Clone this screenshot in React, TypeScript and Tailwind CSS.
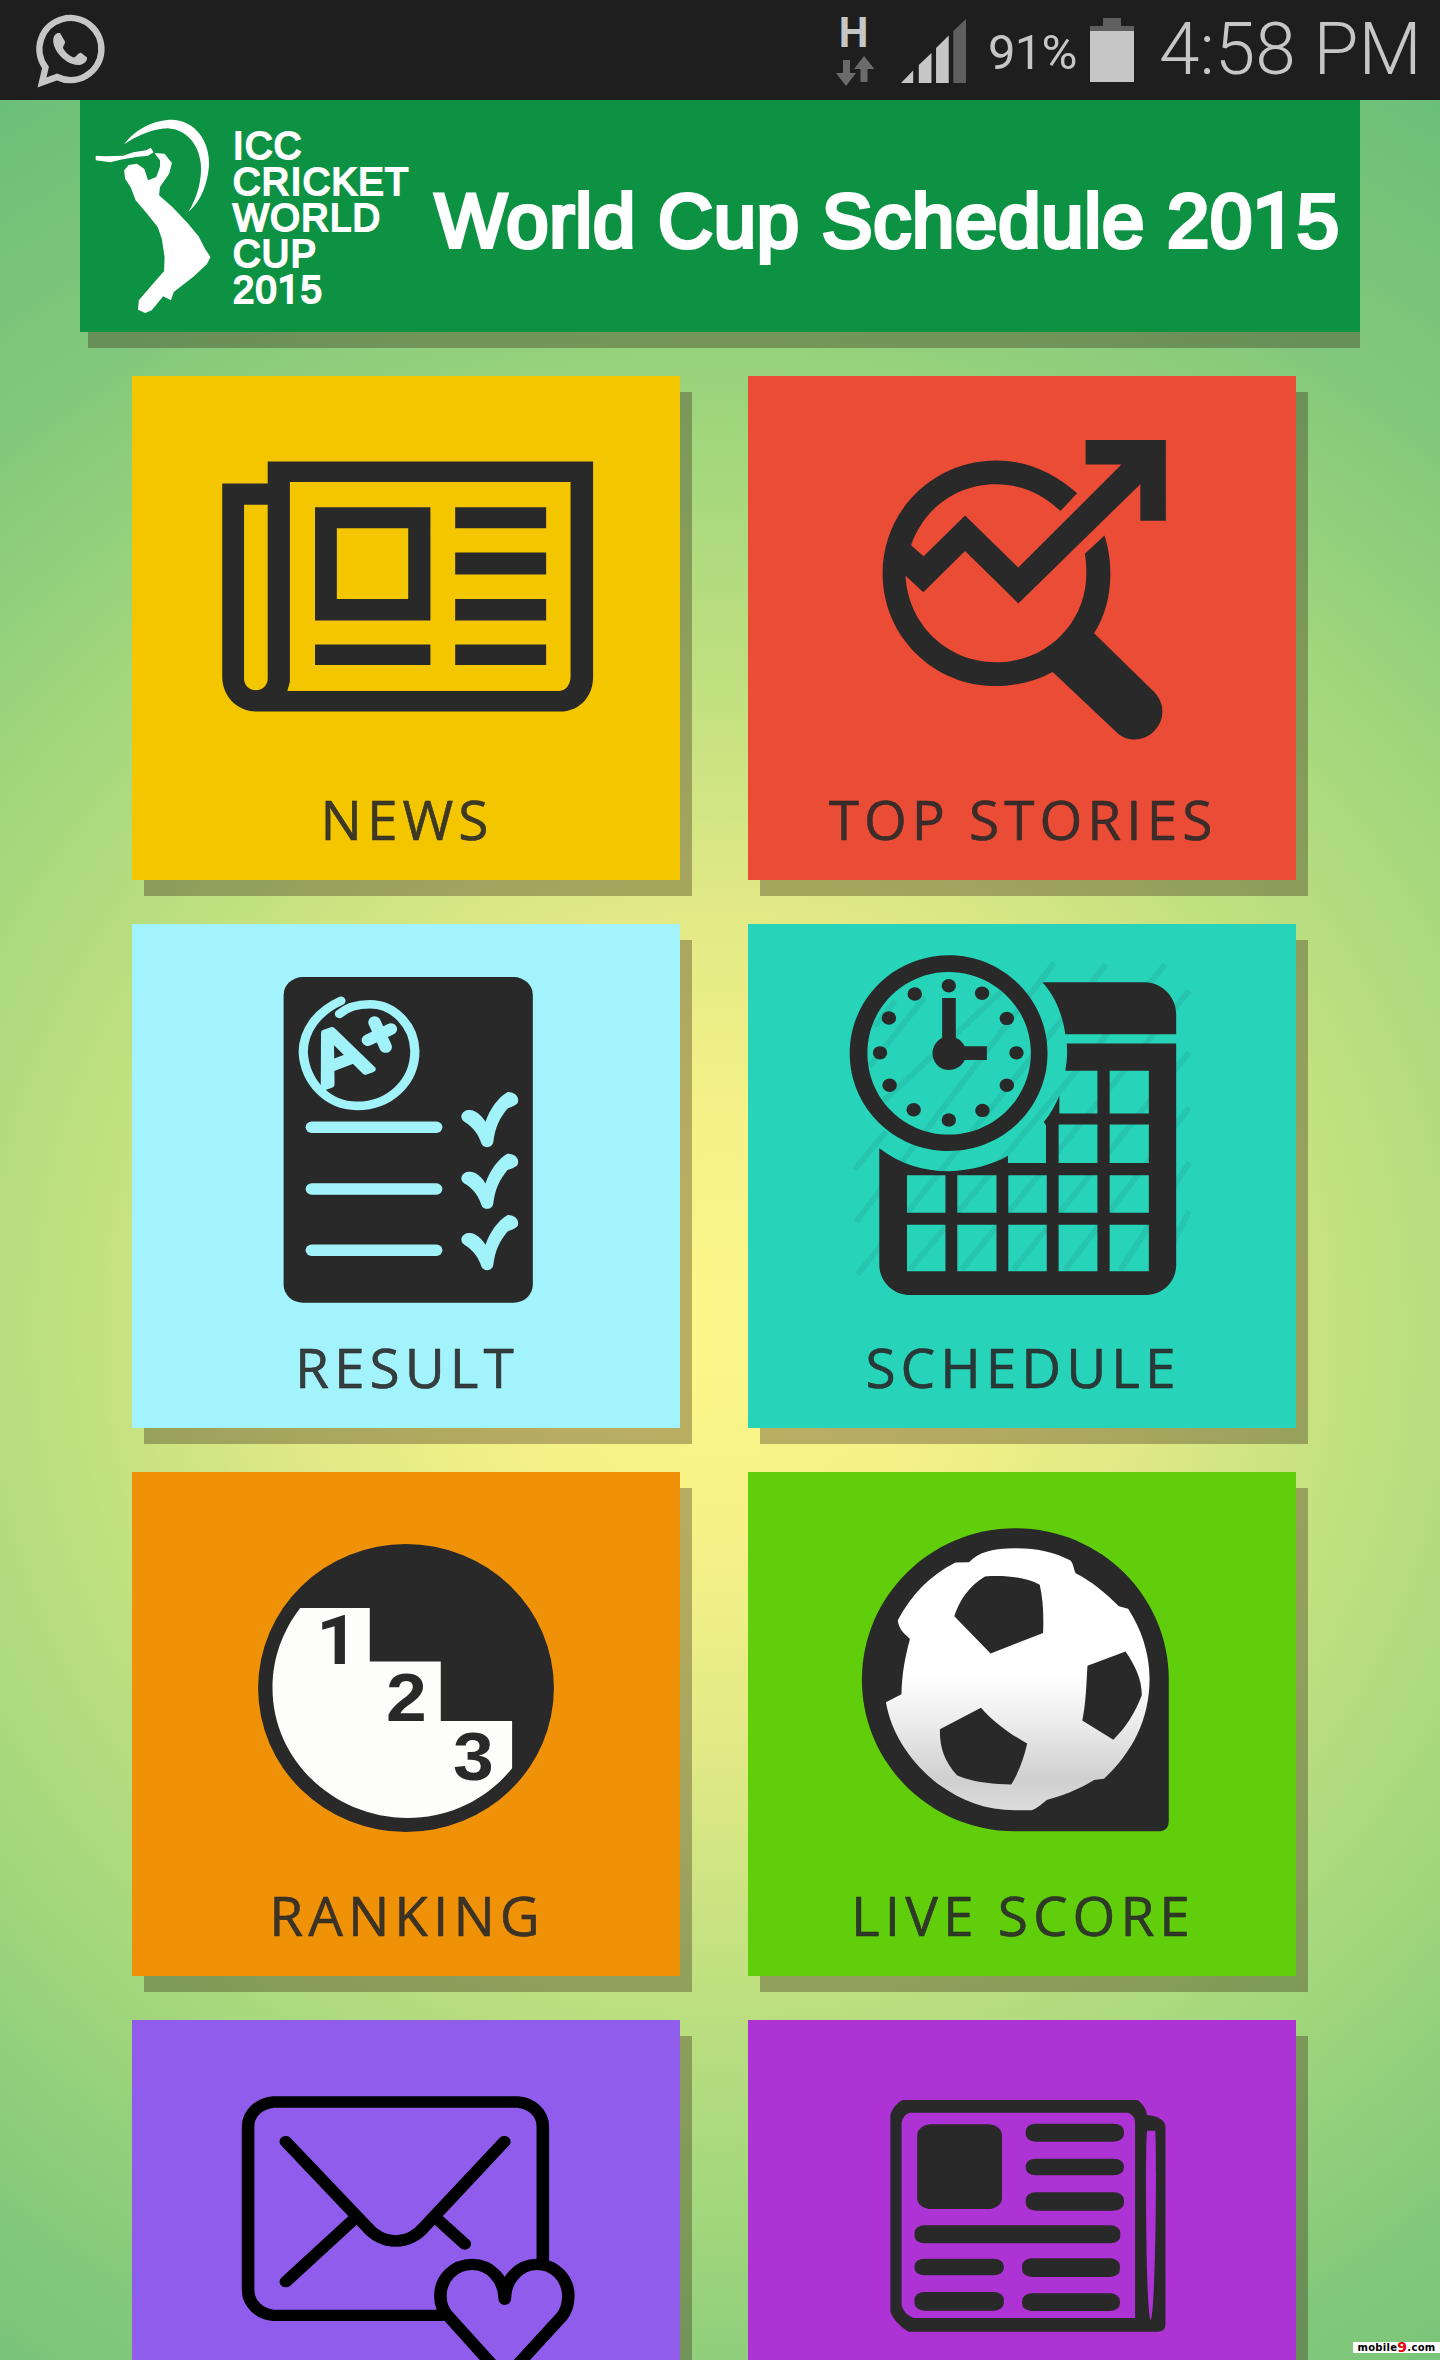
import React from "react";

const INK = "#292929";

function NewsIcon() {
  return (
    <g fill={INK}>
      <path
        fillRule="evenodd"
        d="M399 265H1279V890C1279 950 1240 991 1190 991H370C315 991 276 945 276 890V329H399ZM459 325V905L452 931H1188C1205 931 1218 912 1218 890V325ZM335 391V895C335 940 399 940 399 895V391Z"
      />
      <path fillRule="evenodd" d="M527 398H839V727H527ZM586 459V664H779V459Z" />
      <path d="M527 796H839V856H527ZM906 398H1152V459H906ZM906 529H1152V593H906ZM906 664H1152V727H906ZM906 796H1152V856H906Z" />
    </g>
  );
}

function StoriesIcon() {
  return (
    <g fill={INK}>
      <path d="M912 357C850 298 775 262 693 262C523 262 386 408 386 590C386 772 523 917 693 917C748 917 800 902 846 876L1018 1050C1044 1079 1090 1080 1120 1048C1150 1015 1150 970 1122 936L958 764C988 712 1002 655 1002 590C1002 550 996 513 986 480L933 533C936 552 937 570 937 590C937 733 830 848 693 848C562 848 455 740 448 597L496 645L609 525L753 677L1083 331V437H1152V203H935V274H1032L753 573L609 422L497 540L463 508C497 403 585 331 693 331C760 331 820 360 867 409Z" />
    </g>
  );
}

function ResultIcon() {
  const rows = [0, 179, 357];
  return (
    <g>
      <rect x="442" y="181" width="674" height="945" rx="52" fill={INK} />
      <g fill="none" stroke="#a2f2fa" strokeLinecap="round" strokeLinejoin="round">
        <path
          d="M597 250C535 280 495 335 495 400C500 485 560 555 640 555C730 555 797 485 797 395C795 320 740 260 675 260C640 260 610 272 593 288"
          strokeWidth="25"
        />
        <path d="M688 312L718 384M670 364L732 332" strokeWidth="34" />
        {rows.map((dy) => (
          <path key={dy} d={`M518 ${617 + dy}H855`} strokeWidth="33" />
        ))}
      </g>
      <g transform="translate(617 474) rotate(-22)">
        <text
          textAnchor="middle"
          fontFamily="Liberation Sans, sans-serif"
          fontSize="212"
          fill="#a2f2fa"
          stroke="#a2f2fa"
          strokeWidth="18"
          strokeLinejoin="round"
        >
          A
        </text>
      </g>
      {rows.map((dy) => (
        <path
          key={dy}
          transform={`translate(2 ${dy})`}
          fill="#a2f2fa"
          d="M921 583C925 567 942 563 958 571C970 578 979 589 986 601C997 565 1020 530 1045 515C1068 514 1080 533 1072 548C1065 556 1055 557 1045 563C1025 590 1012 615 1007 660C1005 678 981 680 975 664C968 640 955 620 935 605C924 599 919 592 921 583Z"
        />
      ))}
    </g>
  );
}

function ScheduleIcon() {
  const dots = [
    [565, 206], [655, 228], [722, 301], [748, 401], [722, 495], [656, 568],
    [565, 596], [470, 566], [405, 495], [379, 401], [403, 300], [473, 230],
  ];
  return (
    <g>
      <path
        d="M310 740L395 630M315 890L850 140M318 1045L990 145M460 1030L1150 145M600 1030L1215 220M740 1030L1215 400M880 1030L1215 560M1030 1030L1215 720M1130 1040L1215 860M365 325L420 250M350 440L500 240M390 540L720 210"
        fill="none"
        stroke="#1f9f96"
        strokeOpacity="0.28"
        strokeWidth="16"
      />
      <g fill={INK}>
        <path d="M818 196H1100C1145 200 1180 240 1180 290V347H880C873 290 852 235 818 196Z" />
        <path
          fillRule="evenodd"
          d="M884 374H1180V1015C1180 1065 1145 1104 1095 1104H460C415 1104 377 1065 377 1015V678C430 722 495 745 565 745C625 742 680 728 725 700V721H828V612L822 602C840 580 853 553 864 525V577H967V453H880C885 425 886 400 884 374ZM1000 453V577H1106V453ZM862 609V721H967V609ZM1000 609V721H1106V609ZM452 756V865H556V756ZM588 756V865H694V756ZM726 756V865H830V756ZM862 756V865H967V756ZM1000 756V865H1106V756ZM452 900V1035H556V900ZM588 900V1035H694V900ZM726 900V1035H830V900ZM862 900V1035H967V900ZM1000 900V1035H1106V900Z"
        />
        <path
          fillRule="evenodd"
          d="M565 118C713 118 832 246 832 402C832 559 713 686 565 686C417 686 297 559 297 402C297 246 417 118 565 118ZM565 166C443 166 345 271 345 402C345 533 443 638 565 638C687 638 787 533 787 402C787 271 687 166 565 166Z"
        />
        <path d="M547 242H584V357C595 362 603 371 608 382H668V422H608C600 440 584 451 565 451C541 451 521 429 521 402C521 383 532 365 547 357Z" />
        {dots.map(([x, y]) => (
          <circle key={`${x}-${y}`} cx={x} cy={y} r="19.5" />
        ))}
      </g>
    </g>
  );
}

function RankingIcon() {
  return (
    <g>
      <ellipse cx="773" cy="647" rx="400" ry="418" fill={INK} />
      <path
        d="M487 415H675V570H867V743H1060V880C990 972 890 1024 778 1024C577 1024 412 855 412 647C412 560 440 480 487 415Z"
        fill="#fdfdfc"
      />
      <g fontFamily="Liberation Sans, sans-serif" fontWeight="700" fontSize="198" fill={INK}>
        <text x="530" y="577" fontFamily="Roboto, sans-serif">1</text>
        <text x="719" y="743">2</text>
        <text x="900" y="913">3</text>
      </g>
    </g>
  );
}

function LiveIcon() {
  return (
    <g>
      <defs>
        <linearGradient id="ball" x1="0" y1="0" x2="0" y2="1">
          <stop offset="0.48" stopColor="#ffffff" />
          <stop offset="0.65" stopColor="#eeeeee" />
          <stop offset="0.88" stopColor="#cfcfcf" />
          <stop offset="1" stopColor="#dcdcdc" />
        </linearGradient>
      </defs>
      <path
        d="M745 183C975 183 1160 380 1160 623V1032Q1160 1063 1130 1063H745C516 1063 330 866 330 623C330 380 516 183 745 183Z"
        fill={INK}
      />
      <path
        d="M620 282C645 252 685 241 745 241C805 241 855 254 893 276C903 286 902 300 908 314C950 337 985 367 1025 410L1050 417C1085 475 1108 545 1108 620C1108 740 1060 835 985 910L958 914C915 943 870 960 830 972C812 988 800 999 788 1002H745C665 1002 600 975 535 925C460 860 410 780 395 688L437 665C438 610 446 560 460 505C448 490 430 480 427 450C465 375 515 320 583 283Z"
        fill="url(#ball)"
      />
      <path
        d="M663 323C720 319 770 325 811 347C820 390 822 435 820 487L678 547L580 439C592 395 620 350 663 323ZM940 582L1043 541C1068 580 1087 620 1087 668C1068 720 1045 760 1010 797L926 741C936 690 937 635 940 582ZM652 704C685 745 730 780 777 808C768 850 755 890 734 927C680 926 630 920 588 901C553 860 540 820 541 767Z"
        fill={INK}
      />
    </g>
  );
}

function MailIcon() {
  return (
    <g fill="none" stroke="#000" strokeWidth="34" strokeLinecap="round" strokeLinejoin="round">
      <path d="M870 916H415C375 912 346 880 346 840V350C346 310 375 280 415 276H1075C1115 280 1143 310 1143 350V760" />
      <path d="M448 395L665 648C710 708 780 708 825 648L1039 395M635 625L448 815M855 625L932 702" />
      <path d="M1040 868C1040 808 1000 763 952 763C903 763 866 805 866 858C866 885 874 903 887 918L1040 1106L1194 920C1206 903 1212 883 1212 858C1212 805 1175 763 1127 763C1080 763 1040 808 1040 868Z" />
    </g>
  );
}

function PaperIcon() {
  return (
    <g fill={INK}>
      <path
        fillRule="evenodd"
        d="M365 270H890C902 280 909 295 912 315C935 318 953 330 953 350V945Q953 965 935 965H378C358 950 342 925 337 905V315C342 295 350 280 365 270ZM380 308C370 312 363 325 362 340V885C366 905 376 918 390 924H885V335C884 320 878 312 868 308ZM912 362C908 380 908 905 920 930C932 905 934 380 930 362Z"
      />
      <rect x="397" y="343" width="190" height="254" rx="32" />
      <rect x="640" y="341" width="220" height="54" rx="22" />
      <rect x="640" y="446" width="220" height="50" rx="22" />
      <rect x="640" y="547" width="220" height="55" rx="22" />
      <rect x="391" y="646" width="461" height="54" rx="22" />
      <rect x="391" y="746" width="200" height="50" rx="22" />
      <rect x="632" y="745" width="219" height="56" rx="22" />
      <rect x="391" y="846" width="200" height="56" rx="22" />
      <rect x="632" y="850" width="219" height="53" rx="22" />
    </g>
  );
}

const tiles = [
  { id: "news", label: "NEWS", color: "bg-[#f3c600]", viewBox: "32 17 1482 1161", Icon: NewsIcon },
  { id: "stories", label: "TOP STORIES", color: "bg-[#ea4c35]", viewBox: "22 17 1482 1161", Icon: StoriesIcon },
  { id: "result", label: "RESULT", color: "bg-[#a2f3fb]", viewBox: "32 27 1482 1161", Icon: ResultIcon },
  { id: "schedule", label: "SCHEDULE", color: "bg-[#27d4b9]", viewBox: "22 27 1482 1161", Icon: ScheduleIcon },
  { id: "ranking", label: "RANKING", color: "bg-[#f09208]", viewBox: "32 20 1482 1161", Icon: RankingIcon },
  { id: "live", label: "LIVE SCORE", color: "bg-[#60ce0a]", viewBox: "22 20 1482 1161", Icon: LiveIcon },
  { id: "mail", label: "", color: "bg-[#905ceb]", viewBox: "32 30 1482 1200", Icon: MailIcon },
  { id: "paper", label: "", color: "bg-[#ad33d4]", viewBox: "18 30 1227.5 1200", Icon: PaperIcon },
];

function StatusBar() {
  return (
    <div className="flex h-[100px] items-start bg-[#1e1e1e] font-[Roboto,sans-serif] text-[#c6c6c6]">
      <svg className="ml-8 mt-3 h-[78px] w-[76px]" viewBox="32 12 76 78">
        <path
          d="M45.5 67.5A31 31 0 1 1 57 77L42 82.5Z"
          fill="none"
          stroke="#c6c6c6"
          strokeWidth="6.4"
          strokeMiterlimit="8"
        />
        <path
          d="M53.5 38C54.500 34 57 32.500 60 33L65 41.500C65.500 44 62.500 46 63.200 48.500C65.500 53 69.500 55.500 73.500 57.500C76 57.500 78 52.500 81 52.700L87 57.500C87.500 61 84 64 80 65C72 66 63 60 57.500 52.500C54 47 52.500 42 53.500 38Z"
          fill="#c6c6c6"
        />
      </svg>
      <div className="ml-[728px] mt-[18px] flex w-[38px] flex-col items-center">
        <span className="-ml-[3px] h-[38px] text-[42px] font-bold leading-[30px]">H</span>
        <svg className="h-[30px] w-[38px]" viewBox="0 0 38 30" fill="#6b6b6b">
          <path d="M7 4h7v13h6L10 30L0 17h7ZM24.500 26h7V13h7L28 0L18 13h6.500Z" />
        </svg>
      </div>
      <svg className="ml-[27px] mt-[19px] h-[64px] w-[65px]" viewBox="0 0 64 64" preserveAspectRatio="none" fill="#c6c6c6">
        <path d="M0 64L12 51.500V64ZM17.500 64V46L30 34V64ZM34.500 64V29L47 16.500V64Z" />
        <path d="M51.500 64V12L64 0V64Z" fill="#5f5f5f" />
      </svg>
      <span className="ml-[22px] mt-[28px] w-[92px] whitespace-nowrap text-[49px] leading-[50px] tracking-[-0.8px]">91%</span>
      <div className="ml-[10px] mt-[18px] flex w-[44px] flex-col items-center">
        <div className="h-2 w-[18px] bg-[#5f5f5f]" />
        <div className="h-[5px] w-full bg-[#5f5f5f]" />
        <div className="h-[51px] w-full bg-[#c6c6c6]" />
      </div>
      <span className="ml-[25px] mt-[9px] whitespace-nowrap text-[73px] font-light leading-[80px]">4:58 PM</span>
    </div>
  );
}

function Header() {
  return (
    <header className="mx-20">
      <div className="flex h-[232px] bg-[#0d9244] text-white">
        <svg className="ml-3 mt-[17px] h-[200px] w-[124px]" viewBox="200 350 270 600" preserveAspectRatio="none" fill="#fff">
          <path d="M208 466L230 468L268 466L290 456L318 450L328 442L334 456L322 466L296 470L262 478L240 486L208 480Z" />
          <path d="M336 458L358 460L374 488L368 520L348 560L346 585L375 620L408 668L432 708L446 745L458 770L450 792L420 830L378 875L372 900L355 888L330 930L316 938L300 928L302 900L330 855L357 812L358 770L352 715L343 680L320 640L295 600L284 560L272 535L270 510L280 494L298 490L314 506L322 540L340 530L348 500L348 480Z" />
          <path d="M270 432C295 385 335 358 375 358C425 362 455 420 455 490C452 560 432 610 410 634C428 595 440 540 437 490C432 430 405 388 365 384C330 386 300 405 270 432Z" />
        </svg>
        <div className="ml-[17px] mt-7 w-[202px] font-['Liberation_Sans',sans-serif] text-[38px] leading-[36px] tracking-[1.4px] [-webkit-text-stroke:2.2px_white]">
          <div>ICC</div>
          <div>CRICKET</div>
          <div>WORLD</div>
          <div>CUP</div>
          <div>
            20<span className="font-[Roboto]">1</span>5
          </div>
        </div>
        <h1 className="mt-[76px] whitespace-nowrap font-['Liberation_Sans',sans-serif] text-[76px] leading-[90px] tracking-[0.8px] [-webkit-text-stroke:4px_white]">
          World Cup Schedule 20<span className="font-[Roboto]">1</span>5
        </h1>
      </div>
      <div className="ml-2 h-4 bg-[#32190f]/[0.32]" />
    </header>
  );
}

export default function App() {
  return (
    <div className="relative h-[2360px] w-[1440px] overflow-hidden bg-[radial-gradient(circle_at_720px_1330px,#fdf68a_0px,#f6f288_200px,#e0e985_430px,#c0e080_650px,#a0d67c_900px,#84c97b_1130px,#6cbf79_1420px)]">
      <StatusBar />
      <Header />
      <main className="ml-[132px] mt-7 grid w-[1164px] grid-cols-2 gap-x-[68px] gap-y-11">
        {tiles.map(({ id, label, color, viewBox, Icon }) => (
          <section
            key={id}
            className={`flex h-[504px] w-[548px] flex-col items-center shadow-[12px_16px_0_rgba(50,25,15,0.32)] ${color}`}
          >
            <svg className="h-[400px] w-[548px] shrink-0" viewBox={viewBox} preserveAspectRatio="none">
              <Icon />
            </svg>
            {label && (
              <span className="ml-[2px] mt-[7px] whitespace-nowrap font-['Open_Sans',sans-serif] text-[55px] leading-[72px] tracking-[5px] text-[#292929]/90 [-webkit-text-stroke:0.5px_#292929]">
                {label}
              </span>
            )}
          </section>
        ))}
      </main>
      <div className="absolute right-0 top-[2342px] flex h-[11px] w-[87px] items-center justify-center bg-white font-['DejaVu_Sans',sans-serif] text-[10px] font-bold leading-[11px] tracking-[0.3px] text-black">
        mobile<span className="text-[14px] text-[#e8000c]">9</span>.com
      </div>
    </div>
  );
}
